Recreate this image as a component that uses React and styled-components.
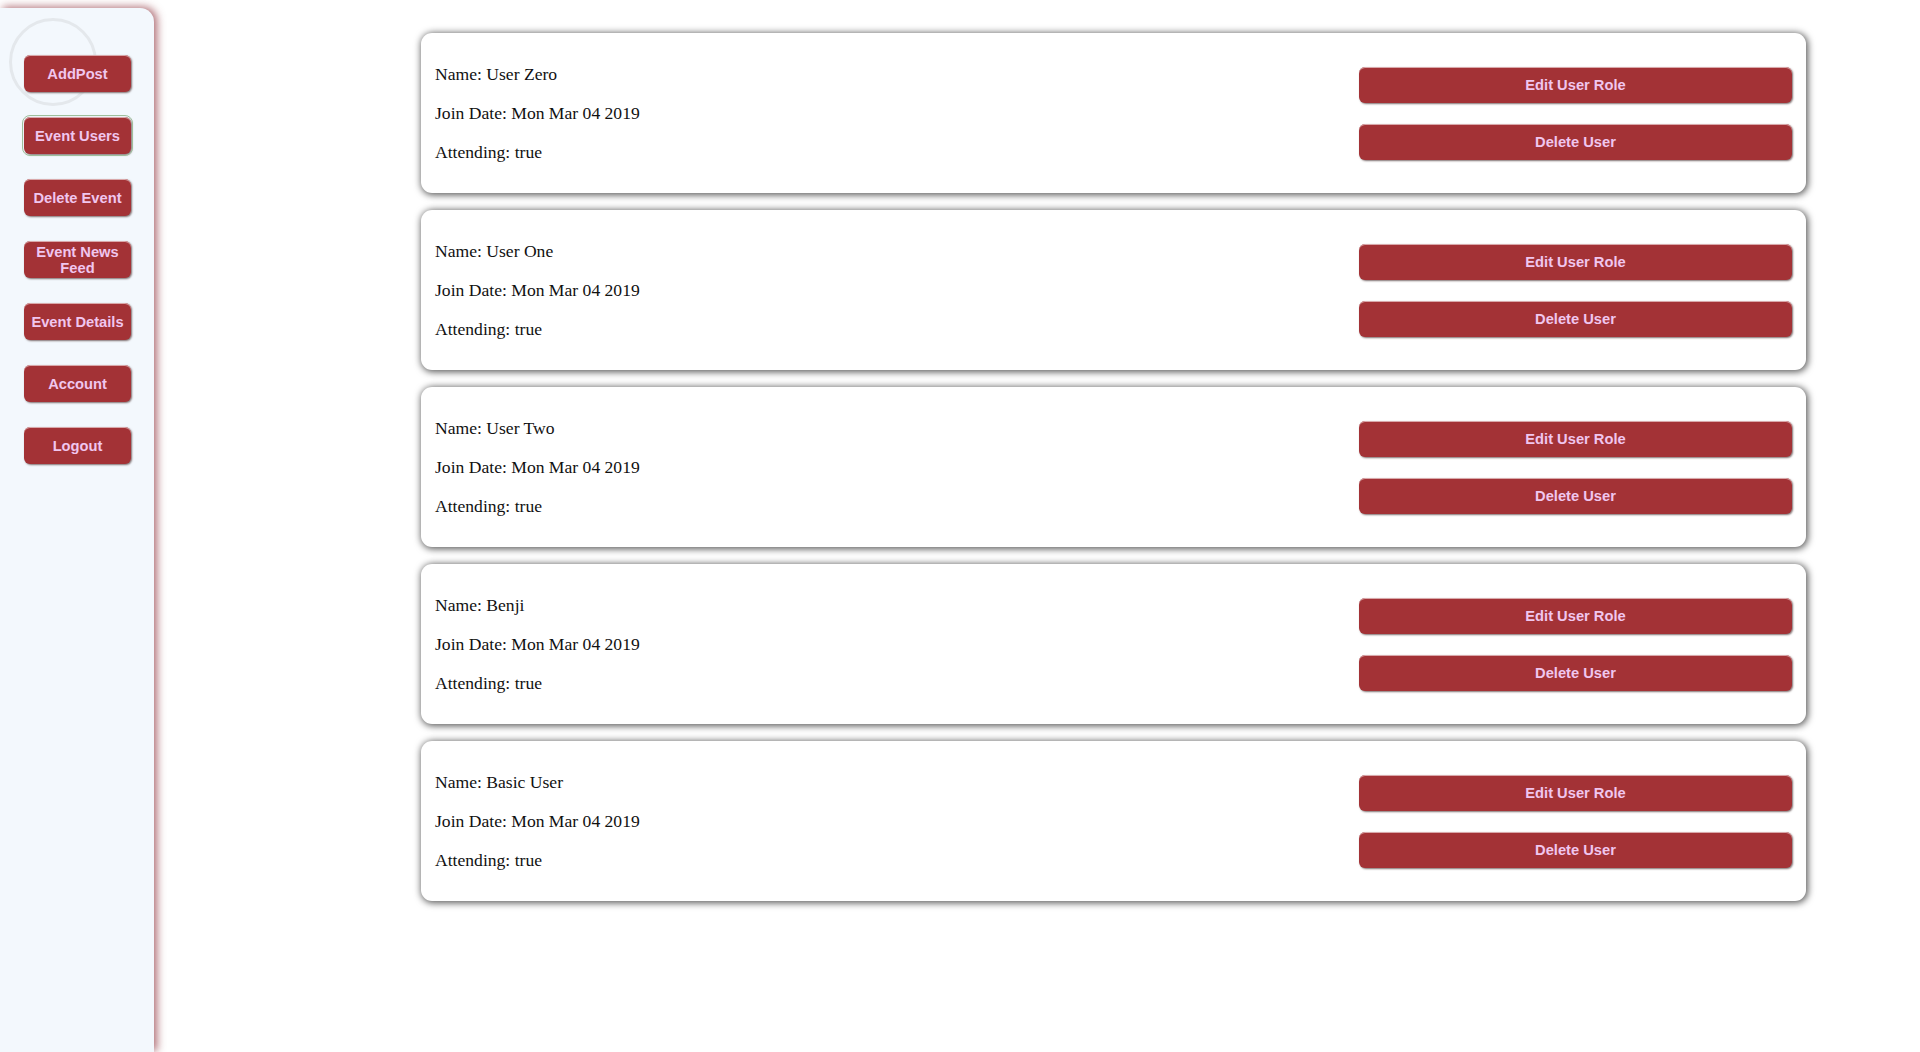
import styled, { createGlobalStyle } from "styled-components";

const GlobalStyle = createGlobalStyle`
  html, body {
    margin: 0;
    padding: 0;
    background: #fff;
  }
  body {
    font-family: "Liberation Serif", "Times New Roman", serif;
  }
`;

const users = [
  { name: "User Zero", joined: "Mon Mar 04 2019", attending: true },
  { name: "User One", joined: "Mon Mar 04 2019", attending: true },
  { name: "User Two", joined: "Mon Mar 04 2019", attending: true },
  { name: "Benji", joined: "Mon Mar 04 2019", attending: true },
  { name: "Basic User", joined: "Mon Mar 04 2019", attending: true },
];

const navItems = [
  "AddPost",
  "Event Users",
  "Delete Event",
  "Event News Feed",
  "Event Details",
  "Account",
  "Logout",
];

export default function App() {
  return (
    <>
      <GlobalStyle />
      <Page>
        <Sidebar>
          <Ring />
          <Nav>
            {navItems.map((item) => (
              <NavButton key={item} $active={item === "Event Users"}>
                {item}
              </NavButton>
            ))}
          </Nav>
        </Sidebar>
        <Main>
          {users.map((user) => (
            <UserCard key={user.name}>
              <Info>
                <Line>Name: {user.name}</Line>
                <Line>Join Date: {user.joined}</Line>
                <Line>Attending: {String(user.attending)}</Line>
              </Info>
              <Actions>
                <ActionButton>Edit User Role</ActionButton>
                <ActionButton>Delete User</ActionButton>
              </Actions>
            </UserCard>
          ))}
        </Main>
      </Page>
    </>
  );
}

const Page = styled.div`
  display: flex;
  align-items: flex-start;
  min-height: 100vh;
`;

const Sidebar = styled.aside`
  position: relative;
  flex: 0 0 154px;
  box-sizing: border-box;
  margin-top: 8px;
  min-height: calc(100vh - 8px);
  padding: 47px 0 0 24px;
  background: #f3f8fd;
  border-top-right-radius: 14px;
  box-shadow: 3px -1px 8px rgba(140, 45, 55, 0.7);
`;

const Ring = styled.div`
  position: absolute;
  left: 9px;
  top: 10px;
  width: 82px;
  height: 82px;
  border: 3px solid #e4e8ec;
  border-radius: 50%;
  pointer-events: none;
`;

const Nav = styled.nav`
  position: relative;
  display: flex;
  flex-direction: column;
  gap: 25px;
`;

const BaseButton = styled.button`
  box-sizing: border-box;
  border: none;
  border-radius: 6px;
  background: #a33236;
  color: #f0c6ee;
  font-family: "Liberation Sans", Arial, sans-serif;
  font-weight: bold;
  font-size: 14.7px;
  line-height: 16px;
  cursor: pointer;
  box-shadow: 1px 1px 2px #7f7070, inset 0 1px 0 #d9a8aa;

  &:hover {
    background: #8e2629;
  }
`;

const NavButton = styled(BaseButton)`
  width: 107px;
  height: 37px;
  padding: 0 4px;
  outline: ${(p) => (p.$active ? "1px solid #9fbf9c" : "none")};
  outline-offset: 1px;
`;

const Main = styled.main`
  display: flex;
  flex-direction: column;
  gap: 17px;
  margin-left: 267px;
  padding-top: 33px;
`;

const UserCard = styled.section`
  box-sizing: border-box;
  display: flex;
  align-items: center;
  justify-content: space-between;
  width: 1385px;
  height: 160px;
  padding: 12px 14px;
  background: #fff;
  border-radius: 11px;
  box-shadow: 1px 1px 7px 1px rgba(0, 0, 0, 0.65);
`;

const Info = styled.div`
  display: flex;
  flex-direction: column;
`;

const Line = styled.p`
  margin: 9px 0;
  font-size: 17.6px;
  line-height: 21px;
  color: #111;
`;

const Actions = styled.div`
  display: flex;
  flex-direction: column;
  gap: 21px;
`;

const ActionButton = styled(BaseButton)`
  width: 433px;
  height: 36px;
`;
